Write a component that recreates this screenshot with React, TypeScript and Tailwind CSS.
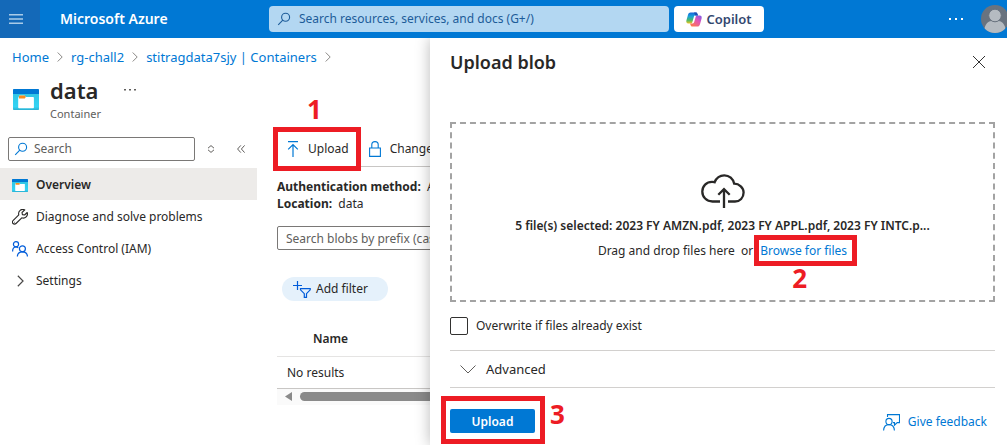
import React from "react";

type IconProps = { className?: string };

function SearchIcon({ className }: IconProps) {
  return (
    <svg viewBox="0 0 14 14" className={className} fill="none" stroke="currentColor" strokeWidth="1.1" aria-hidden="true">
      <circle cx="8.6" cy="5.2" r="4" />
      <path d="M5.8 8.2 1.2 12.8" />
    </svg>
  );
}

function ChevronIcon({ className }: IconProps) {
  return (
    <svg viewBox="0 0 6 10" className={className} fill="none" stroke="currentColor" aria-hidden="true">
      <path d="M.7.5 5.2 5 .7 9.5" />
    </svg>
  );
}

function ContainerIcon({ className }: IconProps) {
  return (
    <svg viewBox="0 0 26 21" className={className} aria-hidden="true">
      <defs>
        <linearGradient id="container-body" x1="0" y1="0" x2="0" y2="1">
          <stop offset="0" stopColor="#32c5e4" />
          <stop offset="0.8" stopColor="#32d4f5" />
          <stop offset="1" stopColor="#2aaed0" />
        </linearGradient>
      </defs>
      <path d="M0 5h26v15.2a.8.8 0 0 1-.8.8H.8a.8.8 0 0 1-.8-.8z" fill="url(#container-body)" />
      <path d="M.8 0h24.4a.8.8 0 0 1 .8.8V5H0V.8A.8.8 0 0 1 .8 0z" fill="#0078d4" />
      <path d="M6 7.3c0-.4.3-.7.7-.7h4.8l1.3 1.5h7.4c.4 0 .7.3.7.7v9.800c0 .4-.3.7-.7.7H5.900c-.4 0-.7-.3-.7-.7V9z" fill="#fff" />
      <path d="M6 7.3c0-.4.3-.7.7-.7h5.300l.8 1.300-1 1.500H6z" fill="#f78d1e" />
    </svg>
  );
}

function CopilotIcon({ className }: IconProps) {
  return (
    <svg viewBox="0 0 16 15" className={className} aria-hidden="true">
      <defs>
        <linearGradient id="copilot-left" x1="0" y1="0" x2="0" y2="1">
          <stop offset="0" stopColor="#1565d8" />
          <stop offset="0.35" stopColor="#18a0dc" />
          <stop offset="0.7" stopColor="#4bb96a" />
          <stop offset="1" stopColor="#f0c51f" />
        </linearGradient>
        <linearGradient id="copilot-right" x1="1" y1="0" x2="0.2" y2="1">
          <stop offset="0" stopColor="#7a5be8" />
          <stop offset="0.45" stopColor="#e254b8" />
          <stop offset="1" stopColor="#ff7a4a" />
        </linearGradient>
      </defs>
      <path d="M4.6.4h5.2c1 0 1.4.6 1.7 1.5l.5 1.7H9.3c-.8 0-1.2.5-1.5 1.4L6.4 10c-.3 1-.9 1.5-1.9 1.5H2.3C.6 11.5 0 10.2.4 8.600L2 2.700C2.500 1.100 3.300.4 4.600.4z" fill="url(#copilot-left)" />
      <path d="M11.4 14.600H6.200c-1 0-1.400-.6-1.700-1.500L4 11.400h2.700c.8 0 1.200-.5 1.500-1.400L9.600 5c.3-1 .9-1.500 1.900-1.500h2.200c1.700 0 2.300 1.300 1.900 2.900L14 12.300c-.5 1.600-1.300 2.300-2.600 2.300z" fill="url(#copilot-right)" />
      <path d="M8 .4h1.800c1 0 1.400.6 1.700 1.500l.5 1.700H9.300z" fill="#1b4fb5" />
    </svg>
  );
}

function Avatar({ className }: IconProps) {
  return (
    <svg viewBox="0 0 28 28" className={className} role="img" aria-label="Account">
      <clipPath id="avatar-clip">
        <circle cx="14" cy="14" r="14" />
      </clipPath>
      <g clipPath="url(#avatar-clip)">
        <rect width="28" height="28" fill="#69737f" />
        <path d="M3 28c0-7 3-12 7.500-12 2 1.400 5 1.400 7 0C22 16 25 21 25 28z" fill="#b5bbc1" />
        <circle cx="14" cy="10.500" r="6.300" fill="#b5bbc1" stroke="#69737f" />
      </g>
    </svg>
  );
}

function WrenchIcon({ className }: IconProps) {
  return (
    <svg viewBox="0 0 16 16" className={className} fill="none" stroke="currentColor" strokeWidth="1.1" strokeLinejoin="round" aria-hidden="true">
      <path d="M12.800.9a4.200 4.200 0 0 0-6 4.900L1 11.600a2.100 2.100 0 0 0 0 2.900 2.100 2.100 0 0 0 3 0l5.800-5.700a4.200 4.200 0 0 0 5.400-5.300L12.600 6 10.400 5.600 10 3.500z" />
      <path d="M2.300 13.200h.6" />
    </svg>
  );
}

function PeopleIcon({ className }: IconProps) {
  return (
    <svg viewBox="0 0 16 16" className={className} fill="none" stroke="currentColor" strokeWidth="1.200" aria-hidden="true">
      <circle cx="4" cy="3.200" r="2.600" />
      <path d="M.6 10.500C.6 7.600 2 6 4 6c1 0 1.700.3 2.300.9" />
      <circle cx="10.400" cy="7.800" r="3" />
      <path d="M5.400 15.600c0-3 2-4.800 5-4.800s5 1.800 5 4.800" />
    </svg>
  );
}

function UploadIcon({ className }: IconProps) {
  return (
    <svg viewBox="0 0 12 16" className={className} fill="none" stroke="currentColor" strokeWidth="1.200" aria-hidden="true">
      <path d="M1 .6h10M6 16V3.600M1.200 8.400 6 3.600l4.800 4.800" />
    </svg>
  );
}

function LockIcon({ className }: IconProps) {
  return (
    <svg viewBox="0 0 12 16" className={className} fill="none" stroke="currentColor" strokeWidth="1.100" aria-hidden="true">
      <path d="M.6 7h10.800v8.400H.6zM2.800 7V3.600C2.800 1.700 4.200.6 6 .6s3.200 1.100 3.200 3V7" />
    </svg>
  );
}

function FilterIcon({ className }: IconProps) {
  return (
    <svg viewBox="0 0 18 17" className={className} fill="none" stroke="currentColor" strokeWidth="1.200" aria-hidden="true">
      <path d="M4.500 0v9M0 4.500h9M7.500 7.600h9.700v1.200l-3.700 3.900v3.700h-2.200v-3.700L7.500 8.800z" />
    </svg>
  );
}

function CloudIcon({ className }: IconProps) {
  return (
    <svg viewBox="0 0 44 34" className={className} fill="none" stroke="currentColor" strokeWidth="2.300" aria-hidden="true">
      <path d="M19 27.500h-7.500C5.500 27.500 1.300 23 1.300 17.500S5.500 7.800 11 7.800c1 0 1.800.1 2.600.4C15.300 4 19 1.300 23.300 1.300c5 0 8.900 3.600 9.900 8.400 5 .1 9.400 3.900 9.400 8.900s-3.600 8.900-8.600 8.900h-7" />
      <path d="M23 34V15.500M17.300 20.800 23 15.200l5.700 5.600" />
    </svg>
  );
}

function FeedbackIcon({ className }: IconProps) {
  return (
    <svg viewBox="0 0 17 17" className={className} fill="none" stroke="currentColor" strokeWidth="1.100" aria-hidden="true">
      <path d="M4.500 3V.6h12v8h-2.300l-2.700 2.600V8.600H10" />
      <circle cx="6" cy="7.500" r="3.100" />
      <path d="M.6 16.500c.2-3.500 2.200-5.900 5.400-5.900s5.200 2.400 5.400 5.900" />
    </svg>
  );
}

function Step({ n, className }: { n: number; className: string }) {
  return (
    <span className={`pointer-events-none absolute text-[26px] leading-5 font-bold text-[#ed1c24] ${className}`}>{n}</span>
  );
}

function Header() {
  return (
    <header className="flex h-[38px] items-center bg-[#0078d4]">
      <button aria-label="Menu" className="flex h-full w-10 shrink-0 items-center justify-center bg-[#1469b8] pr-2 text-[#a9cbe8]">
        <svg viewBox="0 0 14 10" className="h-2.5 w-3.5" stroke="currentColor" strokeWidth="1.500" aria-hidden="true">
          <path d="M0 .8h14M0 5h14M0 9.200h14" />
        </svg>
      </button>
      <a href="#home" className="w-[229px] shrink-0 pl-5 text-sm font-semibold text-white">
        Microsoft Azure
      </a>
      <label className="flex h-[26px] min-w-0 flex-1 items-center gap-2 rounded-sm bg-[#b3d7f2] pl-2 text-[#1d5c99]">
        <SearchIcon className="h-3.5 w-3.5 shrink-0" />
        <input
          aria-label="Search resources"
          placeholder="Search resources, services, and docs (G+/)"
          className="min-w-0 flex-1 bg-transparent outline-none placeholder:text-[#1d5c99]"
        />
      </label>
      <button className="ml-[5px] flex h-[26px] w-[90px] shrink-0 items-center justify-center gap-1 rounded-sm bg-white text-[13px] font-semibold text-[#33476f]">
        <CopilotIcon className="h-[15px] w-4" />
        Copilot
      </button>
      <div className="flex w-[243px] shrink-0 items-center justify-end gap-[18px] overflow-hidden">
        <button aria-label="More" className="flex gap-1 text-white">
          <svg viewBox="0 0 14 2" className="h-0.5 w-3.5" fill="currentColor" aria-hidden="true">
            <path d="M0 0h2v2H0zM6 0h2v2H6zM12 0h2v2h-2z" />
          </svg>
        </button>
        <Avatar className="-mr-0.5 h-7 w-7 shrink-0" />
      </div>
    </header>
  );
}

function Sidebar() {
  return (
    <nav className="w-[257px] shrink-0 pt-[14px] text-[#292827]">
      <div className="flex items-center pl-2 text-[#605e5c]">
        <label className="flex h-6 w-[187px] items-center gap-1.5 rounded-xs border border-[#7a7876] pl-[5px]">
          <SearchIcon className="h-3.5 w-3.5 shrink-0 text-[#0078d4]" />
          <input aria-label="Search menu" placeholder="Search" className="min-w-0 flex-1 bg-transparent outline-none placeholder:text-[#605e5c]" />
        </label>
        <button aria-label="Expand all" className="ml-3">
          <svg viewBox="0 0 8 8" className="h-2 w-2" fill="none" stroke="currentColor" aria-hidden="true">
            <path d="M1 3.200 4 .6l3 2.600M1 4.800l3 2.600 3-2.600" />
          </svg>
        </button>
        <button aria-label="Collapse menu" className="ml-[22px]">
          <svg viewBox="0 0 8 8" className="h-2 w-2" fill="none" stroke="currentColor" aria-hidden="true">
            <path d="M3.800.4.6 4l3.200 3.600M7.600.4 4.400 4l3.200 3.600" />
          </svg>
        </button>
      </div>
      <ul className="mt-[7px]">
        <li>
          <a href="#overview" className="flex h-8 items-center gap-2 bg-[#edebe9] pt-0.5 pl-3 font-semibold">
            <ContainerIcon className="h-[13px] w-4" />
            Overview
          </a>
        </li>
        <li>
          <a href="#diagnose" className="flex h-8 items-center gap-2 pt-0.5 pl-3">
            <WrenchIcon className="h-4 w-4" />
            Diagnose and solve problems
          </a>
        </li>
        <li>
          <a href="#iam" className="flex h-8 items-center gap-2 pt-0.5 pl-3">
            <PeopleIcon className="h-4 w-4 text-[#015cda]" />
            Access Control (IAM)
          </a>
        </li>
        <li>
          <button className="flex h-8 items-center gap-2 pt-0.5 pl-3">
            <span className="flex w-4 justify-center">
              <ChevronIcon className="h-3 w-[7px] text-[#494847]" />
            </span>
            Settings
          </button>
        </li>
      </ul>
    </nav>
  );
}

function Content() {
  return (
    <div className="min-w-0 flex-1 pl-5 text-[#292827]">
      <div className="flex h-11 items-center gap-5 border-b border-[#c8c6c4] pt-2 pl-2.5">
        <div className="relative">
          <button className="flex items-center gap-[9px]">
            <UploadIcon className="h-4 w-3 text-[#0078d4]" />
            Upload
          </button>
          <span className="pointer-events-none absolute -top-3 -right-3 -bottom-3 -left-3.5 border-[5px] border-[#ed1c24]" />
          <Step n={1} className="-top-10 left-5" />
        </div>
        <button className="flex items-center gap-[9px] whitespace-nowrap">
          <LockIcon className="h-4 w-3 text-[#0078d4]" />
          Change access level
        </button>
      </div>
      <div className="mt-[11px] leading-[17px]">
        <p>
          <b>Authentication method:</b>&nbsp; Access key
        </p>
        <p>
          <b>Location:</b>&nbsp; data
        </p>
      </div>
      <input
        aria-label="Search blobs"
        placeholder="Search blobs by prefix (case-sensitive)"
        className="mt-[14px] block h-6 w-full rounded-xs border border-[#7a7876] px-2 outline-none placeholder:text-[#605e5c]"
      />
      <button className="mt-[27px] ml-[5px] flex h-6 w-[106px] items-center gap-[5px] rounded-full bg-[#e5f1fb] pl-[11px]">
        <FilterIcon className="h-[17px] w-[18px] text-[#015cda]" />
        Add filter
      </button>
      <table className="mt-[21px] w-full border-b border-[#c8c6c4] text-left">
        <thead>
          <tr className="h-[34px] border-b border-[#e5e4e3]">
            <th className="pl-9 font-semibold">Name</th>
          </tr>
        </thead>
        <tbody>
          <tr className="h-8">
            <td className="pt-0.5 pl-2.5">No results</td>
          </tr>
        </tbody>
      </table>
      <div className="flex h-4 items-center gap-2 bg-[#fafafa] pl-2">
        <svg viewBox="0 0 7 9" className="h-[9px] w-[7px]" fill="#8a8a8a" aria-hidden="true">
          <path d="M7 0v9L0 4.500z" />
        </svg>
        <div className="h-[9px] flex-1 rounded-full bg-[#8a8a8a]" />
      </div>
    </div>
  );
}

function UploadPanel() {
  return (
    <aside className="absolute inset-y-0 right-0 flex w-[577px] flex-col bg-white pr-3 pl-5 text-[#292827] shadow-[0_0_14px_rgba(0,0,0,0.28)]">
      <div className="flex h-12 items-center justify-between pr-2.5">
        <h2 className="text-lg font-semibold">Upload blob</h2>
        <button aria-label="Close">
          <svg viewBox="0 0 12 12" className="h-3 w-3" stroke="#333" aria-hidden="true">
            <path d="M0 0l12 12M12 0 0 12" />
          </svg>
        </button>
      </div>
      <div className="mt-9 flex h-[180px] flex-col items-center border-2 border-dashed border-[#a3a3a3] pt-[50px]">
        <CloudIcon className="h-[34px] w-11" />
        <p className="mt-2 font-semibold">5 file(s) selected: 2023 FY AMZN.pdf, 2023 FY APPL.pdf, 2023 FY INTC.p...</p>
        <p className="mt-[5px] flex gap-[7px]">
          Drag and drop files here &nbsp;or
          <span className="relative">
            <button className="text-[#0078d4]">Browse for files</button>
            <span className="pointer-events-none absolute -top-1.5 -right-2.5 -bottom-[5px] -left-1.5 border-[5px] border-[#ed1c24]" />
            <Step n={2} className="top-[27px] left-8" />
          </span>
        </p>
      </div>
      <label className="mt-[14px] flex items-center gap-2 self-start">
        <input type="checkbox" className="h-[18px] w-[18px] appearance-none rounded-xs border border-[#323130] checked:bg-[#0078d4]" />
        Overwrite if files already exist
      </label>
      <button className="mt-[14px] flex h-[38px] items-center gap-2.5 border-y border-[#d2d0ce] pl-2.5 text-[13px]">
        <svg viewBox="0 0 16 9" className="h-[9px] w-4" fill="none" stroke="#605e5c" aria-hidden="true">
          <path d="M.5.5 8 8 15.500.5" />
        </svg>
        Advanced
      </button>
      <div className="mt-[21px] flex h-6 items-center justify-between pr-2">
        <div className="relative">
          <button className="h-6 w-[85px] rounded-xs bg-[#0078d4] pt-0.5 font-semibold text-white">Upload</button>
          <span className="pointer-events-none absolute -top-[13px] -right-2.5 -bottom-[11px] -left-[9px] border-[5px] border-[#ed1c24]" />
          <Step n={3} className="-top-[5px] left-[100px]" />
        </div>
        <a href="#feedback" className="flex items-center gap-2 pt-0.5 text-[#0078d4]">
          <FeedbackIcon className="h-[17px] w-[17px]" />
          Give feedback
        </a>
      </div>
    </aside>
  );
}

export default function App() {
  const crumbs = ["Home", "rg-chall2", "stitragdata7sjy | Containers"];
  return (
    <div className="flex min-h-screen flex-col bg-white font-['Noto_Sans','Open_Sans',sans-serif] text-xs leading-5">
      <Header />
      <div className="relative flex-1 overflow-hidden">
        <nav aria-label="Breadcrumb" className="flex h-[38px] items-center gap-2 pl-3 text-[13px] text-[#0078d4]">
          {crumbs.map((c) => (
            <React.Fragment key={c}>
              <a href="#crumb">{c}</a>
              <ChevronIcon className="h-2.5 w-1.5 text-[#8a8886]" />
            </React.Fragment>
          ))}
        </nav>
        <div className="flex h-[47px] items-center gap-[11px] pl-[13px]">
          <ContainerIcon className="h-[21px] w-[26px]" />
          <div>
            <div className="flex items-center gap-[26px]">
              <h1 className="text-[22px] leading-7 font-semibold text-[#292827]">data</h1>
              <button aria-label="More actions">
                <svg viewBox="0 0 12 2" className="h-0.5 w-3" fill="#605e5c" aria-hidden="true">
                  <path d="M0 0h2v1.500H0zM5 0h2v1.500H5zM10 0h2v1.500h-2z" />
                </svg>
              </button>
            </div>
            <p className="text-[11px] leading-5 text-[#605e5c]">Container</p>
          </div>
        </div>
        <div className="flex">
          <Sidebar />
          <Content />
        </div>
        <UploadPanel />
      </div>
    </div>
  );
}
